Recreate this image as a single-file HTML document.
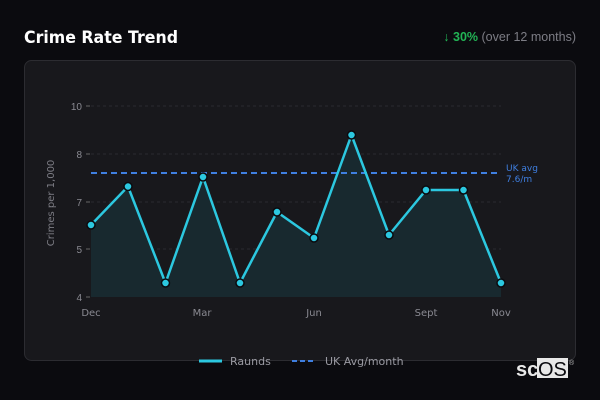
<!DOCTYPE html>
<html><head><meta charset="utf-8"><style>
html,body{margin:0;padding:0;width:600px;height:400px;background:#0b0b0f;overflow:hidden;font-family:"DejaVu Sans","Liberation Sans",sans-serif}
</style></head><body>
<svg width="600" height="400" viewBox="0 0 600 400" xmlns="http://www.w3.org/2000/svg" style="position:absolute;left:0;top:0">
<rect x="24.5" y="60.5" width="551" height="300" rx="7" fill="#18181c" stroke="#2c2c31"/>
<text x="24" y="43" fill="#ffffff" font-size="17" font-weight="bold" font-family="DejaVu Sans, sans-serif" textLength="154" lengthAdjust="spacingAndGlyphs">Crime Rate Trend</text>
<text x="576" y="41" text-anchor="end" font-size="12.5" font-family="Liberation Sans, sans-serif" fill="#7d7d85"><tspan fill="#22b455" font-weight="bold">↓ 30%</tspan> (over 12 months)</text>
<g stroke="#2a2a30" stroke-dasharray="3,3" stroke-width="1">
<line x1="91" y1="106" x2="501" y2="106"/><line x1="91" y1="154" x2="501" y2="154"/>
<line x1="91" y1="202" x2="501" y2="202"/><line x1="91" y1="249" x2="501" y2="249"/>
</g>
<g stroke="#666" stroke-width="1">
<line x1="86" y1="106" x2="90" y2="106"/><line x1="86" y1="154" x2="90" y2="154"/><line x1="86" y1="202" x2="90" y2="202"/><line x1="86" y1="249" x2="90" y2="249"/><line x1="86" y1="297" x2="90" y2="297"/>
</g>
<g fill="#8a8a92" font-size="10" font-family="Liberation Sans, sans-serif" text-anchor="end">
<text x="82" y="110">10</text><text x="82" y="158">8</text><text x="82" y="206">7</text><text x="82" y="253">5</text><text x="82" y="301">4</text>
</g>
<text transform="translate(54,203) rotate(-90)" text-anchor="middle" fill="#7d7d85" font-size="10" font-family="DejaVu Sans, sans-serif">Crimes per 1,000</text>
<g fill="#8a8a92" font-size="10" font-family="DejaVu Sans, sans-serif" text-anchor="middle">
<text x="91" y="316">Dec</text><text x="202" y="316">Mar</text><text x="314" y="316">Jun</text><text x="426" y="316">Sept</text><text x="501" y="316">Nov</text>
</g>
<polygon fill="#18292f" points="91,297 91,225 128,186.5 165.5,283 203,177 240,283 277,212 314,238 351.5,135 389,235 426,190 463.5,190 501,283 501,297"/>
<line x1="91" y1="173" x2="501" y2="173" stroke="#3f7fe0" stroke-width="2" stroke-dasharray="6,4"/>
<text x="506" y="171" fill="#3f7fe0" font-size="9" font-family="DejaVu Sans, sans-serif">UK avg</text>
<text x="506" y="182" fill="#3f7fe0" font-size="9" font-family="DejaVu Sans, sans-serif">7.6/m</text>
<polyline fill="none" stroke="#2cc8e0" stroke-width="2.5" stroke-linejoin="round" points="91,225 128,186.5 165.5,283 203,177 240,283 277,212 314,238 351.5,135 389,235 426,190 463.5,190 501,283"/>
<g fill="#2cc8e0" stroke="#0b0b0f" stroke-width="1.5">
<circle cx="91" cy="225" r="4"/><circle cx="128" cy="186.5" r="4"/><circle cx="165.5" cy="283" r="4"/><circle cx="203" cy="177" r="4"/><circle cx="240" cy="283" r="4"/><circle cx="277" cy="212" r="4"/><circle cx="314" cy="238" r="4"/><circle cx="351.5" cy="135" r="4"/><circle cx="389" cy="235" r="4"/><circle cx="426" cy="190" r="4"/><circle cx="463.5" cy="190" r="4"/><circle cx="501" cy="283" r="4"/>
</g>
<line x1="199" y1="361" x2="222" y2="361" stroke="#2cc8e0" stroke-width="3"/>
<text x="230" y="365" fill="#9a9aa2" font-size="11" font-family="DejaVu Sans, sans-serif">Raunds</text>
<line x1="292" y1="361" x2="316" y2="361" stroke="#3f7fe0" stroke-width="2" stroke-dasharray="5,3"/>
<text x="325" y="365" fill="#9a9aa2" font-size="11" font-family="DejaVu Sans, sans-serif">UK Avg/month</text>
<rect x="537" y="358" width="31" height="20" fill="#e8e8e8"/>
<text x="516" y="376" fill="#e8e8e8" font-size="20" font-weight="bold" font-family="Liberation Sans, sans-serif">sc</text>
<text x="538" y="376" fill="#0b0b0f" font-size="20" font-family="Liberation Sans, sans-serif">OS</text>
<text x="569" y="365" fill="#bbb" font-size="7" font-family="Liberation Sans, sans-serif">®</text>
</svg>
</body></html>
